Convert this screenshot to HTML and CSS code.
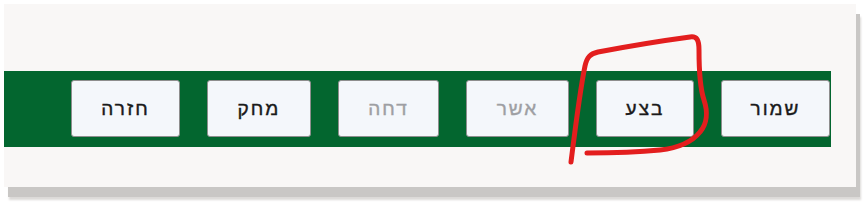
FILE: index.html
```html
<!DOCTYPE html>
<html lang="he">
<head>
<meta charset="utf-8">
<title>Toolbar</title>
<link rel="stylesheet" href="styles.css">
</head>
<body>
<div class="shot">
  <div class="panel">
    <div class="toolbar" dir="rtl">
      <button class="btn btn-save">שמור</button>
      <button class="btn btn-do">בצע</button>
      <button class="btn btn-approve is-disabled">אשר</button>
      <button class="btn btn-reject is-disabled">דחה</button>
      <button class="btn btn-delete">מחק</button>
      <button class="btn btn-back">חזרה</button>
    </div>
  </div>
  <svg class="annotation" width="863" height="208" viewBox="0 0 863 208" aria-hidden="true">
    <path d="M571,162 C575,130 580,90 585,66 C587,57 590,54 598,52 C630,46 660,41 690,37 C697,36 699,40 699,50 C699,70 700,88 704,100 C708,112 707,124 700,132 C692,142 678,148 660,150 C630,153 610,153 587,153" fill="none" stroke="#e31e1e" stroke-width="5" stroke-linecap="round" stroke-linejoin="round"/>
  </svg>
</div>
</body>
</html>
```
FILE: styles.css
```css
html, body {
  margin: 0;
  padding: 0;
  background: #ffffff;
}

.shot {
  position: relative;
  width: 863px;
  height: 208px;
  overflow: hidden;
}

.panel {
  margin: 4px 0 0 4px;
  width: 852px;
  height: 183px;
  background: #f9f7f6;
  box-shadow: 4px 10px 0 0 #c9c7c5, 5px 13px 2px 0 #dcdad8;
  padding-top: 67px;
  box-sizing: border-box;
}

.toolbar {
  width: 827px;
  height: 76px;
  background: #03662f;
  display: flex;
  flex-direction: row;
  gap: 27px;
  padding: 9px 1px 10px 0;
  box-sizing: border-box;
}

.btn {
  height: 57px;
  padding: 0;
  background: #f4f7fb;
  border: 1px solid #8e8e8e;
  border-radius: 3px;
  font-family: "Liberation Sans", "DejaVu Sans", sans-serif;
  font-weight: 400;
  font-size: 19px;
  letter-spacing: 2px;
  -webkit-text-stroke: 0.4px currentColor;
  color: #1a1a1a;
  text-align: center;
  flex: none;
}

.btn-save { width: 109px; }
.btn-do { width: 98px; }
.btn-approve { width: 103px; }
.btn-reject { width: 101px; }
.btn-delete { width: 104px; }
.btn-back { width: 109px; }

.btn.is-disabled {
  color: #9e9fa3;
}

.annotation {
  position: absolute;
  left: 0;
  top: 0;
  pointer-events: none;
}
```
